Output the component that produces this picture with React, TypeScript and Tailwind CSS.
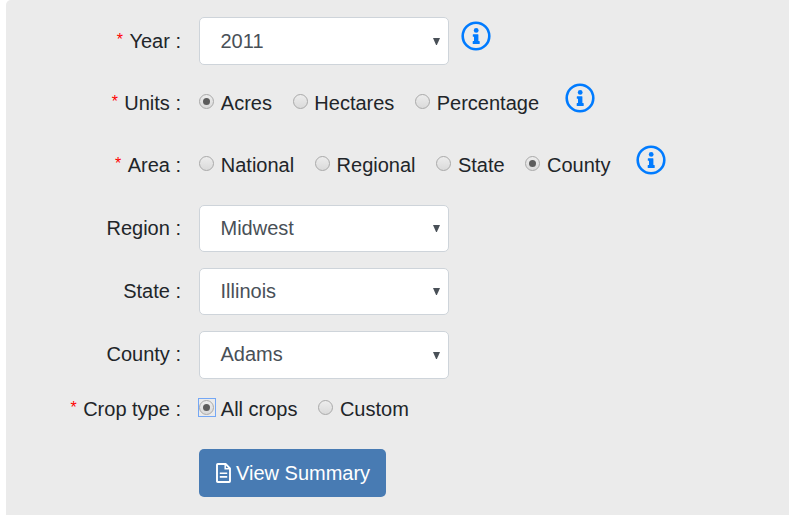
import React from "react";

function InfoIcon({ className = "" }: { className?: string }) {
  return (
    <svg viewBox="0 0 30 30" className={`mb-[10px] h-[30px] w-[30px] shrink-0 text-[#007bff] ${className}`}>
      <circle cx="15" cy="15" r="13.3" fill="none" stroke="currentColor" strokeWidth="2.6" />
      <circle cx="15.2" cy="9.4" r="2.4" fill="currentColor" />
      <path
        fill="currentColor"
        d="M12.3 13.2h4.6q.5 0 .5.5v6.3h.8q.5 0 .5.5v2q0 .5-.5.5h-6q-.5 0-.5-.5v-2q0-.5.5-.5h.8v-4.2h-.7q-.5 0-.5-.5v-1.6q0-.5.5-.5z"
      />
    </svg>
  );
}

function Label({ text, required }: { text: string; required?: boolean }) {
  return (
    <div className="mr-[18px] flex w-[175px] shrink-0 justify-end whitespace-pre">
      {required && <span className="mr-[2px] pt-px text-base leading-[25px] text-[#ff0000]">* </span>}
      <span>{text} :</span>
    </div>
  );
}

function Select({ value, raised }: { value: string; raised?: boolean }) {
  return (
    <div className="flex h-full w-[250px] items-center justify-between rounded-[5px] border border-[#ced4da] bg-white pr-[8px] pl-[20.5px] text-[#495057]">
      <span className={raised ? "pb-[2px]" : ""}>{value}</span>
      <svg viewBox="0 0 7 7" className="h-[7px] w-[7px]">
        <path d="M0 0h7L3.9 7h-.8z" fill="#495057" />
      </svg>
    </div>
  );
}

function Radio({ label, checked, focused }: { label: string; checked?: boolean; focused?: boolean }) {
  return (
    <label className="mr-[20.6px] flex items-center gap-[6.8px]">
      <span
        className={`mb-[3px] flex h-[15px] w-[15px] items-center justify-center rounded-full border border-[#a9a9a9] bg-linear-to-b from-[#ededed] to-[#dadada] ${
          focused
            ? "relative before:absolute before:-top-[3px] before:-right-[3px] before:-bottom-[3px] before:-left-[2px] before:border before:border-[#74a7f5] before:content-['']"
            : ""
        }`}
      >
        {checked && <span className="h-[7px] w-[7px] rounded-full bg-[#5c5c5c]" />}
      </span>
      <span>{label}</span>
    </label>
  );
}

export default function App() {
  return (
    <div className="h-[515px] overflow-hidden bg-white pl-[6px] font-['Liberation_Sans',Arial,sans-serif] text-xl leading-[30px] text-[#212529]">
      <form className="h-[530px] rounded-tl-[5px] bg-[#ebebeb] pt-[17px]">
        <div className="flex h-[48px] items-center">
          <Label text="Year" required />
          <Select value="2011" />
          <InfoIcon className="ml-[12px]" />
        </div>
        <div className="mt-[18px] flex h-[40px] items-center">
          <Label text="Units" required />
          <Radio label="Acres" checked />
          <Radio label="Hectares" />
          <Radio label="Percentage" />
          <InfoIcon className="ml-[5px]" />
        </div>
        <div className="mt-[22px] flex h-[40px] items-center">
          <Label text="Area" required />
          <Radio label="National" />
          <Radio label="Regional" />
          <Radio label="State" />
          <Radio label="County" checked />
          <InfoIcon className="ml-[5px]" />
        </div>
        <div className="mt-[20px] flex h-[47px] items-center">
          <div className="pb-[2px]">
            <Label text="Region" />
          </div>
          <Select value="Midwest" raised />
        </div>
        <div className="mt-[16px] flex h-[47px] items-center">
          <div className="pb-[2px]">
            <Label text="State" />
          </div>
          <Select value="Illinois" raised />
        </div>
        <div className="mt-[16px] flex h-[48px] items-center">
          <div className="pb-[2px]">
            <Label text="County" />
          </div>
          <Select value="Adams" raised />
        </div>
        <div className="mt-[15px] flex h-[30px] items-center">
          <Label text="Crop type" required />
          <Radio label="All crops" checked focused />
          <Radio label="Custom" />
        </div>
        <button
          type="button"
          className="mt-[25px] ml-[193px] flex h-[48px] w-[187px] items-center rounded-[5px] bg-[#487bb3] pl-[17px] text-white"
        >
          <svg viewBox="0 0 15 20" className="mr-[5px] h-[20px] w-[15px]" fill="none" stroke="currentColor">
            <path d="M1.8 1h7.8L14 5.4v12.8q0 .8-.8.8H1.8q-.8 0-.8-.8V1.8Q1 1 1.8 1z" strokeWidth="1.9" strokeLinejoin="round" />
            <path d="M9.2 1v4.8H14" strokeWidth="1.5" />
            <path d="M3.8 10.3h7.4M3.8 13.9h7.4" strokeWidth="1.6" />
          </svg>
          <span>View Summary</span>
        </button>
      </form>
    </div>
  );
}
